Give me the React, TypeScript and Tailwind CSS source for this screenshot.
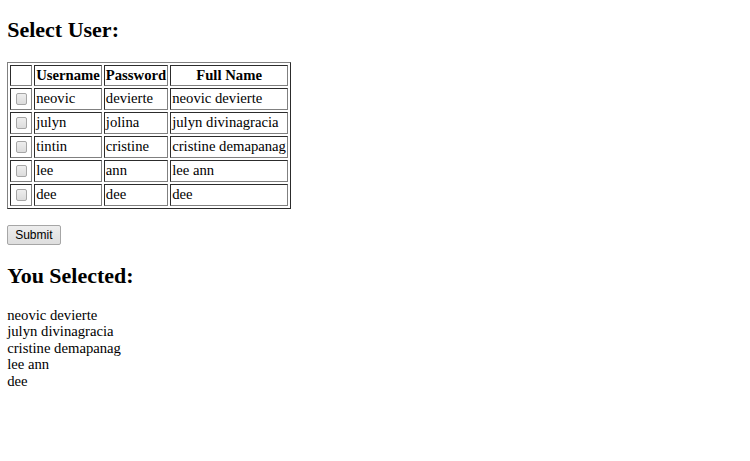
import { type FC } from 'react';

type User = {
  username: string;
  password: string;
  fullName: string;
};

const USERS: User[] = [
  { username: 'neovic', password: 'devierte', fullName: 'neovic devierte' },
  { username: 'julyn', password: 'jolina', fullName: 'julyn divinagracia' },
  { username: 'tintin', password: 'cristine', fullName: 'cristine demapanag' },
  { username: 'lee', password: 'ann', fullName: 'lee ann' },
  { username: 'dee', password: 'dee', fullName: 'dee' },
];

const cellClass =
  'border border-[#808080] [--tw-border-style:inset] p-[1px] align-middle';

const Checkbox: FC = () => (
  <input
    type="checkbox"
    className="m-[0_2.7px_0_3.6px] block h-[11.7px] w-[11.7px] appearance-none rounded-[2px] border border-[#a6a6a6] bg-gradient-to-b from-[#eeeeee] to-[#dcdcdc]"
  />
);

const UserTable: FC = () => (
  <table className="mt-[19px] border-separate border-spacing-[2px] border border-[#808080] [--tw-border-style:outset]">
    <thead>
      <tr className="h-[21px]">
        <th className={cellClass} />
        <th className={`${cellClass} text-center font-bold`}>Username</th>
        <th className={`${cellClass} text-center font-bold`}>Password</th>
        <th className={`${cellClass} text-center font-bold`}>Full Name</th>
      </tr>
    </thead>
    <tbody>
      {USERS.map(user => (
        <tr key={user.username} className="h-[22px]">
          <td className={cellClass}>
            <Checkbox />
          </td>
          <td className={cellClass}>{user.username}</td>
          <td className={cellClass}>{user.password}</td>
          <td className={cellClass}>{user.fullName}</td>
        </tr>
      ))}
    </tbody>
  </table>
);

export default function App() {
  return (
    <div className="min-h-[461px] bg-white px-[7.2px] pt-[17.9px] font-['Liberation_Serif',serif] text-[14.7px] leading-[16.55px] text-black">
      <h2 className="text-[22px] leading-[24.8px] font-bold">Select User:</h2>

      <UserTable />

      <div className="mt-[16px]">
        <button
          type="button"
          className="h-[20px] rounded-[2px] border border-[#a6a6a6] bg-gradient-to-b from-[#ededed] to-[#dedede] px-[7px] font-['Liberation_Sans',sans-serif] text-[12px] leading-[14px] text-black"
        >
          Submit
        </button>
      </div>

      <h2 className="mt-[19.3px] text-[22px] leading-[24.8px] font-bold">You Selected:</h2>

      <div className="mt-[17.9px]">
        {USERS.map(user => (
          <div key={user.username}>{user.fullName}</div>
        ))}
      </div>
    </div>
  );
}
